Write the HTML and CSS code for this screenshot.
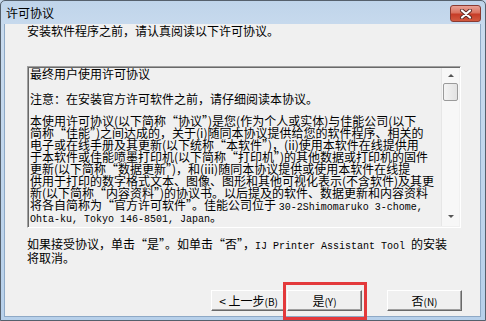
FILE: index.html
```html
<!DOCTYPE html>
<html lang="zh-CN">
<head>
  <meta charset="utf-8">
  <title>许可协议</title>
  <link rel="stylesheet" href="styles.css">
</head>
<body>
  <div class="window">
    <div class="titlebar">
      <span class="title">许可协议</span>
      <span class="close">
        <svg width="14" height="10" viewBox="0 0 14 10">
          <path d="M3 1.5 L11 8.5 M11 1.5 L3 8.5" stroke="#5a2a24" stroke-width="4" stroke-linecap="round"/>
          <path d="M3 1.5 L11 8.5 M11 1.5 L3 8.5" stroke="#fff" stroke-width="2.2" stroke-linecap="round"/>
        </svg>
      </span>
    </div>

    <div class="body">
      <p class="intro">安装软件程序之前，请认真阅读以下许可协议。</p>

      <!-- 许可协议文本 -->
      <div class="license">
        <div class="license-text">
          <div class="line lic-title">最终用户使用许可协议</div>
          <div class="line lic-note">注意：在安装官方许可软件之前，请仔细阅读本协议。</div>
          <div class="line">本使用许可协议(以下简称“协议”)是您(作为个人或实体)与佳能公司(以下</div>
          <div class="line">简称“佳能”)之间达成的，关于(i)随同本协议提供给您的软件程序、相关的</div>
          <div class="line">电子或在线手册及其更新(以下统称“本软件”)，(ii)使用本软件在线提供用</div>
          <div class="line">于本软件或佳能喷墨打印机(以下简称“打印机”)的其他数据或打印机的固件</div>
          <div class="line">更新(以下简称“数据更新”)，和(iii)随同本协议提供或使用本软件在线提</div>
          <div class="line">供用于打印的数字格式文本、图像、图形和其他可视化表示(不含软件)及其更</div>
          <div class="line">新(以下简称“内容资料”)的协议书。以后提及的软件、数据更新和内容资料</div>
          <div class="line">将各自简称为“官方许可软件”。佳能公司位于 <span class="en">30-2Shimomaruko 3-chome,</span></div>
          <div class="line"><span class="en">Ohta-ku, Tokyo 146-8501, Japan</span>。</div>
        </div>
        <div class="scrollbar">
          <span class="arrow up"></span>
          <span class="thumb"></span>
          <span class="track"></span>
          <span class="arrow down"></span>
        </div>
      </div>

      <p class="note">如果接受协议，单击“是”。如单击“否”，<span class="en">IJ Printer Assistant Tool </span>的安装<br>将取消。</p>

      <div class="buttons">
        <button class="btn">&lt; 上一步<span class="key">(B)</span></button>
        <span class="marked">
          <button class="btn">是<span class="key">(Y)</span></button>
        </span>
        <button class="btn btn-no">否<span class="key">(N)</span></button>
      </div>
    </div>
  </div>
</body>
</html>
```

FILE: styles.css
```css
html, body {
  margin: 0;
  padding: 0;
}

body {
  font-family: "Noto Sans CJK SC", sans-serif;
  font-size: 12px;
  color: #000;
  background: #c6d8ec;
}

.window {
  width: 486px;
  height: 321px;
  box-sizing: border-box;
  border: 1px solid #55606c;
  border-radius: 5px 5px 0 0;
  background: linear-gradient(#bfd4ea, #c9dbee 30px, #b7d0ea);
  display: flex;
  flex-direction: column;
}

.titlebar {
  height: 23px;
  display: flex;
  align-items: center;
  justify-content: space-between;
  padding: 0 0 0 5px;
}

.title {
  line-height: 14px;
  margin-top: 1px;
}

.close {
  width: 29px;
  height: 15px;
  margin-right: 4px;
  margin-top: 2px;
  border: 1px solid #8a3a31;
  border-radius: 3px;
  background: linear-gradient(#e9a195 0%, #d9725f 45%, #c63c27 55%, #d25a40 100%);
  display: flex;
  align-items: center;
  justify-content: center;
}

.body {
  flex: 1;
  margin: 0 4px 3px 3px;
  background: #f0f0f0;
  padding: 0 0 0 22px;
  border: 1px solid #8ea9c6;
  border-top: none;
}

.intro {
  margin: 0;
  line-height: 14px;
}

.license {
  margin-top: 28px;
  width: 434px;
  height: 162px;
  box-sizing: border-box;
  border: 1px solid;
  border-color: #a0a0a0 #ffffff #ffffff #a0a0a0;
  box-shadow: inset 1px 1px 0 #696969;
  display: flex;
  background: #f0f0f0;
}

.license-text {
  flex: 1;
  min-width: 0;
  padding: 1px 0 0 2px;
}

.line {
  white-space: nowrap;
  line-height: 12px;
  height: 12px;
}

.lic-title {
  margin-bottom: 13px;
}

.lic-note {
  margin-bottom: 10px;
}

.en {
  font-family: "Liberation Mono", monospace;
  font-size: 10px;
}

.scrollbar {
  position: relative;
  width: 17px;
  margin: 1px 1px 1px 0;
  background: #f7f7f7;
  border-left: 1px solid #e6e6e6;
  display: flex;
  flex-direction: column;
  align-items: center;
}

.arrow {
  width: 0;
  height: 0;
  border-left: 3px solid transparent;
  border-right: 3px solid transparent;
}

.arrow.up {
  margin-top: 6px;
  border-bottom: 3px solid #555;
}

.arrow.down {
  margin-bottom: 8px;
  border-top: 3px solid #555;
}

.thumb {
  margin-top: 6px;
  width: 13px;
  height: 16px;
  border: 1px solid #9a9a9a;
  border-radius: 2px;
  background: linear-gradient(90deg, #f4f4f4, #e2e2e2);
}

.track {
  flex: 1;
}

.note {
  margin: 10px 0 0 0;
  line-height: 11px;
}

.buttons {
  display: flex;
  margin-top: 27px;
  padding-left: 184px;
}

.btn {
  width: 75px;
  height: 21px;
  padding: 0;
  font-family: inherit;
  font-size: 12px;
  color: #000;
  background: #f0f0f0;
  border: 1px solid;
  border-color: #ffffff #696969 #696969 #ffffff;
  box-shadow: inset -1px -1px 0 #a0a0a0;
  line-height: 17px;
}

.key {
  font-size: 10px;
}

.marked {
  position: relative;
  margin-left: 1px;
  display: flex;
}

.marked::after {
  content: "";
  position: absolute;
  top: -8px;
  left: -4px;
  right: -5px;
  bottom: -9px;
  border: 3px solid #e3393b;
}

.btn-no {
  margin-left: 25px;
}
```
